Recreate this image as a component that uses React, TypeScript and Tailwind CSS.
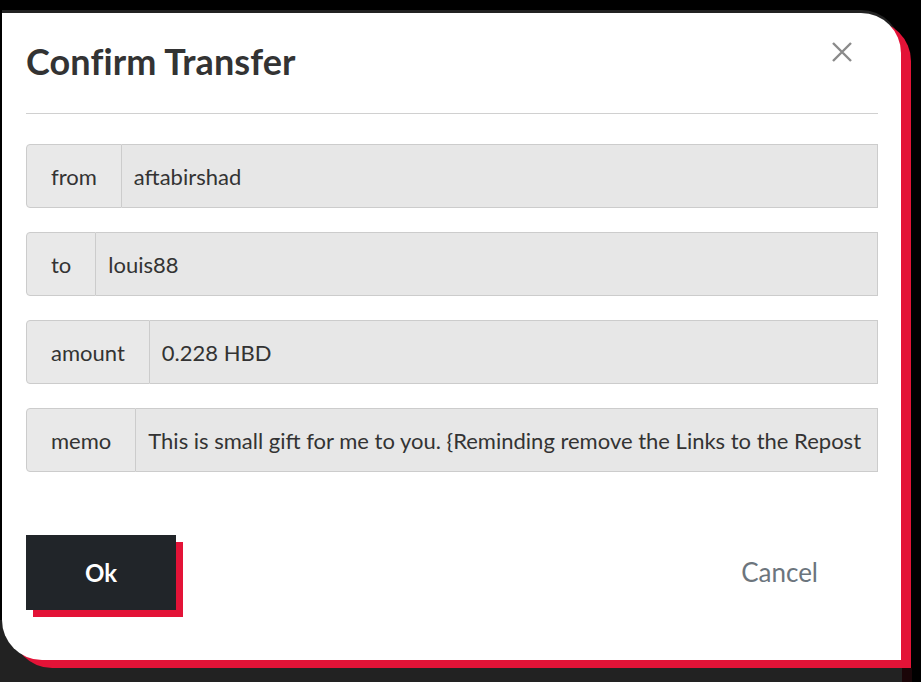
import React from "react";

const rows: { label: string; value: string }[] = [
  { label: "from", value: "aftabirshad" },
  { label: "to", value: "louis88" },
  { label: "amount", value: "0.228 HBD" },
  { label: "memo", value: "This is small gift for me to you. {Reminding remove the Links to the Repost of my content}" },
];

export default function App() {
  return (
    <div
      className="relative w-[921px] h-[682px] bg-black overflow-hidden"
      style={{ fontFamily: "Lato, 'Open Sans', sans-serif" }}
    >
      <div className="absolute left-0 top-[620px] w-[902px] h-[62px] bg-[#222222]" />
      <div className="absolute left-[902px] top-[668px] w-[10px] h-[14px] bg-[#1a0508]" />
      <div className="relative ml-[2px] mt-[13px] w-[899px] h-[647px] bg-white rounded-tr-[40px] rounded-bl-[40px] shadow-[10px_8px_0_#e31337,0_-3px_0_#222222] flex flex-col px-[24px]">
        <div className="flex items-start justify-between h-[100px] pr-[24px]">
          <h1 className="mt-[27px] text-[36px] font-bold text-[#333333] leading-[42px] tracking-[0.1px]">
            Confirm Transfer
          </h1>
          <button className="mt-[28px] text-[#8a8a8a]" aria-label="close">
            <svg width="22" height="22" viewBox="0 0 22 22" fill="none" stroke="currentColor" strokeWidth="2.4" strokeLinecap="butt">
              <path d="M2 2 L20 20 M20 2 L2 20" />
            </svg>
          </button>
        </div>
        <div className="h-px bg-[#d0d0d0] w-[852px]" />
        <div className="flex flex-col gap-[24px] mt-[30px] w-[852px]">
          {rows.map((r) => (
            <div key={r.label} className="flex h-[64px] text-[22px] text-[#333333]">
              <div className="flex items-center px-[24px] bg-[#e9e9e9] border border-[#cccccc] rounded-l-[4px] shrink-0">
                {r.label}
              </div>
              <div className="flex-1 min-w-0 flex items-center pl-[12px] pr-[12px] bg-[#e7e7e7] border border-l-0 border-[#cccccc] overflow-hidden whitespace-nowrap">
                <span className="overflow-hidden">{r.value}</span>
              </div>
            </div>
          ))}
        </div>
        <div className="flex items-center justify-between mt-[63px] w-[852px]">
          <button className="w-[150px] h-[75px] bg-[#212529] text-white text-[24px] font-bold shadow-[7px_7px_0_#e31337]">
            Ok
          </button>
          <button className="mr-[60px] text-[26px] text-[#6c757d]">Cancel</button>
        </div>
      </div>
    </div>
  );
}
